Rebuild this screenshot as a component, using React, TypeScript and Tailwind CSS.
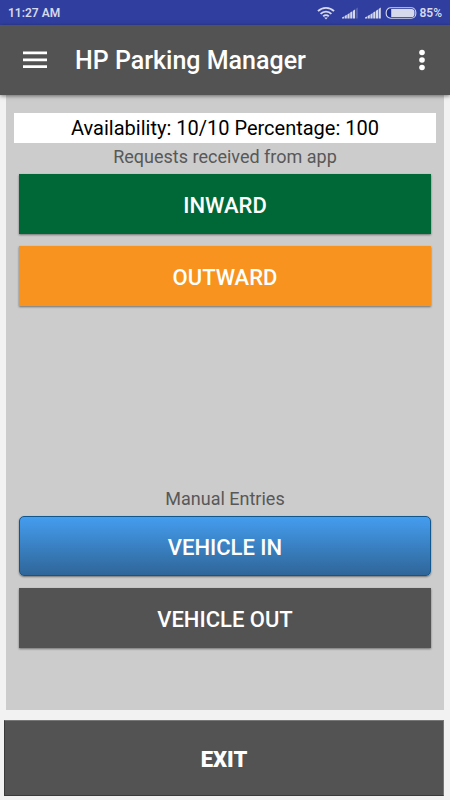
const actionButton =
  "h-[60px] w-full pt-0.5 text-[22px] font-medium text-white shadow-[0_1px_2px_rgba(0,0,0,0.45)]";

function StatusBar() {
  return (
    <div className="flex h-[25px] items-center justify-between bg-[#303f9f] px-2 text-xs font-semibold text-[#d6d9ec]">
      <span>11:27 AM</span>

      <div className="flex items-center">
        {/* WIFI */}
        <svg width="18" height="14" viewBox="0 0 18 14" fill="none" stroke="currentColor" strokeWidth="1.9">
          <path d="M1 5.2a11.3 11.3 0 0 1 16 0" />
          <path d="M3.6 7.9a7.6 7.6 0 0 1 10.8 0" />
          <path d="M6.2 10.4a4 4 0 0 1 5.6 0" />
          <path d="M7.2 11.6h3.6L9 13.6Z" fill="currentColor" stroke="none" />
        </svg>

        {/* SIGNAL */}
        <Signal weak />
        <Signal />

        {/* BATTERY */}
        <svg className="mr-0.5 ml-1" width="32" height="12" viewBox="0 0 32 12">
          <rect x="1.2" y="0.7" width="29.6" height="10.6" rx="4.5" fill="#1c2c91" stroke="#d6d9ec" strokeWidth="1.1" />
          <path d="M6.2 2H26.7a2.8 2.8 0 0 1 2.8 2.8V7.2a2.8 2.8 0 0 1-2.8 2.8H6.2Z" fill="#d6d9ec" />
        </svg>

        <span>85%</span>
      </div>
    </div>
  );
}

function Signal({ weak = false }: { weak?: boolean }) {
  return (
    <svg className="ml-[7px]" width="16" height="12" viewBox="0 0 16 12" fill="currentColor">
      <path d="M0 11.5V10.6L2 9.4V11.5Z" />
      <path d="M2.6 11.5V9L4.8 7.8V11.5Z" />
      <path d="M5.4 11.5V7.4L7.6 6V11.5Z" />
      <path d="M8.2 11.5V5.6L10.4 4.2V11.5Z" />
      <path d="M11 11.5V3.8L13 2.4V11.5Z" />
      <path d="M13.6 11.5V2L15.8 0.5V11.5Z" opacity={weak ? 0.25 : 1} />
    </svg>
  );
}

export default function App() {
  return (
    <div className="flex min-h-screen flex-col bg-[#f2f2f2] font-[Roboto,sans-serif]">
      <StatusBar />

      {/* APP BAR */}
      <header className="relative flex h-[70px] items-center bg-[#535353] px-[18px] text-white shadow-[0_1px_4px_rgba(0,0,0,0.5)]">
        <button type="button" aria-label="Menu" className="flex w-[34px] justify-center">
          <svg width="24" height="18" viewBox="0 0 24 18" fill="currentColor">
            <path d="M0 0.5h24v2.8H0zM0 7.4h24v2.8H0zM0 14.3h24v2.8H0z" />
          </svg>
        </button>

        <h1 className="ml-[23px] grow pt-0.5 text-[25px] font-medium">HP Parking Manager</h1>

        <button type="button" aria-label="More options" className="flex w-5 justify-center">
          <svg width="6" height="22" viewBox="0 0 6 22" fill="currentColor">
            <circle cx="3" cy="3.5" r="2.8" />
            <circle cx="3" cy="11" r="2.8" />
            <circle cx="3" cy="18.5" r="2.8" />
          </svg>
        </button>
      </header>

      {/* CONTENT */}
      <main className="mx-[6px] flex grow flex-col bg-[#ccc] px-2 pt-[18px] pb-[62px]">
        <p className="bg-white text-center text-xl leading-[30px] text-black">
          Availability: 10/10 Percentage: 100
        </p>

        <section className="px-[5px] text-center">
          <h2 className="pb-[3px] text-lg leading-7 text-[#585858]">Requests received from app</h2>
          <div className="flex flex-col gap-3">
            <button type="button" className={`${actionButton} bg-[#006837]`}>
              INWARD
            </button>
            <button type="button" className={`${actionButton} bg-[#f7931e]`}>
              OUTWARD
            </button>
          </div>
        </section>

        <section className="mt-auto px-[5px] text-center">
          <h2 className="pb-[3px] text-lg leading-7 text-[#585858]">Manual Entries</h2>
          <div className="flex flex-col gap-3">
            <button
              type="button"
              className={`${actionButton} rounded-[5px] border border-[#11568c] bg-linear-to-b from-[#449def] to-[#2f6699]`}
            >
              VEHICLE IN
            </button>
            <button type="button" className={`${actionButton} bg-[#535353]`}>
              VEHICLE OUT
            </button>
          </div>
        </section>
      </main>

      {/* EXIT */}
      <footer className="mr-[6px] ml-1 pt-[10px] pb-1">
        <button
          type="button"
          className="h-[76px] w-full border border-[#3a3a3a] border-t-[#777] border-r-[#777] bg-[#535353] pt-0.5 text-[22px] font-black text-white"
        >
          EXIT
        </button>
      </footer>
    </div>
  );
}
